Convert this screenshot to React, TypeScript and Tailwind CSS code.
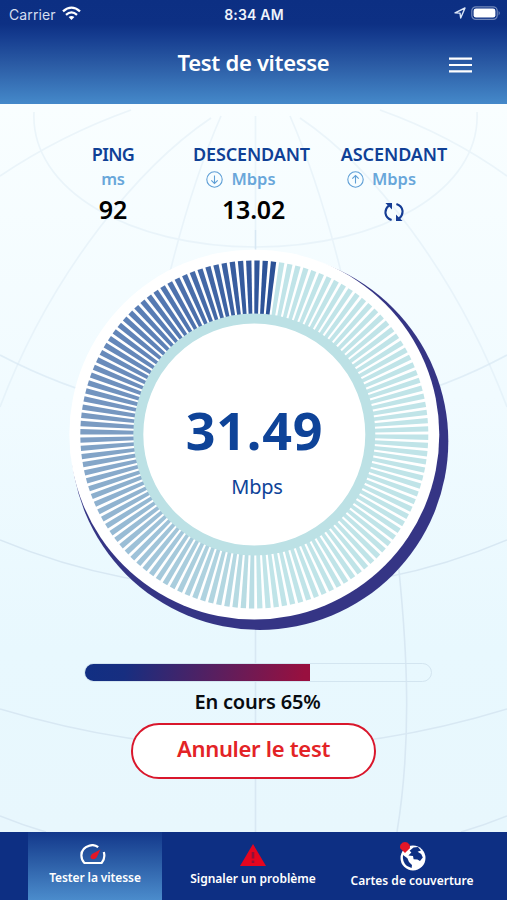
import React from 'react';

const TICK_COUNT = 132;
const STEP = 360 / TICK_COUNT;
const CX = 254.3;
const CY = 434.5;

// speed ramp, from the bottom of the dial (0) clockwise to the top (1)
const RAMP = [
  [186, 222, 228],
  [157, 193, 216],
  [122, 155, 194],
  [88, 124, 180],
  [42, 80, 150],
];

const rampColor = (t: number) => {
  const pos = Math.min(Math.max(t, 0), 0.9999) * (RAMP.length - 1);
  const i = Math.floor(pos);
  const c = RAMP[i].map((v, k) => Math.round(v + (RAMP[i + 1][k] - v) * (pos - i)));
  return `rgb(${c.join(',')})`;
};

const point = (deg: number, r: number) => {
  const a = (deg * Math.PI) / 180;
  return `${(CX + r * Math.sin(a)).toFixed(2)},${(CY - r * Math.cos(a)).toFixed(2)}`;
};

const ticks = Array.from({ length: TICK_COUNT }, (_, i) => {
  const deg = -179.1 + i * STEP;
  return {
    points: [point(deg - 0.88, 120), point(deg - 0.88, 174), point(deg + 0.88, 174), point(deg + 0.88, 120)].join(' '),
    fill: deg < 7 ? rampColor((deg + 180) / 187) : '#c0e4e8',
  };
});

const Globe: React.FC = () => (
  <svg className="absolute inset-0" width="507" height="728" viewBox="0 104 507 728" fill="none" stroke="#d8e8f3" strokeWidth="1.6" aria-hidden="true">
    <path d="M255.5 230V832" />
    <g opacity=".4">
      <path d="M255.5 116V230" />
      <path d="M34 112C30 190 130 247 255.5 247S481 190 477 112" />
      <path d="M290 116Q318 180 341 272M221 116Q193 180 170 272" />
      <path d="M300 118C370 165 455 270 507 407M211 118C141 165 52 270 0 407" />
      <path d="M380 110Q450 135 507 176M131 110Q61 135 0 176" />
    </g>
    <path d="M0 355Q120 418 255 418T507 355" opacity=".7" />
    <path d="M0 540Q120 590 255 590T507 540" />
    <path d="M0 709Q130 748 255 748T507 709" />
    <path d="M0 816Q22 825 46 832M507 816Q485 825 461 832" />
    <path d="M341 272Q392 440 399 571C407 650 412 740 397 832" />
  </svg>
);

const Dial: React.FC = () => (
  <svg className="absolute inset-0" width="400" height="400" viewBox="54 235 400 400" aria-hidden="true">
    <circle cx="259.7" cy="441.3" r="188.6" fill="#353585" />
    <circle cx={CX} cy={CY} r="185" fill="#fff" />
    {ticks.map(t => (
      <polygon key={t.points} points={t.points} fill={t.fill} />
    ))}
    <circle cx={CX} cy={CY} r="116" fill="#fff" stroke="#bce1e5" strokeWidth="10" />
  </svg>
);

const DirectionIcon: React.FC<{ up?: boolean }> = ({ up }) => (
  <svg width="17" height="17" viewBox="0 0 17 17" fill="none" stroke="#5f9fd6" strokeWidth="1.1">
    <circle cx="8.5" cy="8.5" r="7.7" />
    <path d={up ? 'M8.5 12.5V4.5M5.3 7.7L8.5 4.5L11.7 7.7' : 'M8.5 4.5V12.5M5.3 9.3L8.5 12.5L11.7 9.3'} />
  </svg>
);

const App: React.FC = () => {
  const progress = 65;

  return (
    <div className="flex h-[900px] w-[507px] flex-col overflow-hidden bg-[#eaf8fd] font-['Noto_Sans','Open_Sans',sans-serif]">
      <header className="h-[104px] bg-[linear-gradient(#0c2f83_0px,#0d3084_24px,#153c8f_36px,#2c5da6_66px,#4488c9_103px)] text-white">
        <div className="grid h-7 grid-cols-3 items-center pl-[9px] pr-[6px] font-['Inter',sans-serif]">
          <div className="flex items-center gap-[6px]">
            <span className="text-[14px] tracking-[0.1px] text-[#d5def0]">Carrier</span>
            <svg className="-mt-[2px]" width="19" height="15" viewBox="0 0 19 15" fill="none" stroke="#fff" strokeWidth="2.3">
              <path d="M1 5.4Q9.5 -2.2 18 5.4M4 8.8Q9.5 4 15 8.8" />
              <path d="M6.6 11.1Q9.5 8.7 12.4 11.1L9.5 14Z" fill="#fff" stroke="none" />
            </svg>
          </div>
          <span className="pr-[2px] text-center text-[14px] font-semibold tracking-[0.2px] text-[#eef3fb]">8:34 AM</span>
          <div className="-mt-[2px] flex items-center justify-end gap-[5px]">
            <svg width="12" height="12" viewBox="0 0 12 12" fill="none" stroke="#dbe6f7" strokeWidth="1.4" strokeLinejoin="round">
              <path d="M1 5.8L11 1L6.7 11L6 6.1Z" />
            </svg>
            <svg width="30" height="15" viewBox="0 0 30 15">
              <rect x=".8" y=".8" width="25.4" height="12.6" rx="4" fill="none" stroke="#7188ba" strokeWidth="1.2" />
              <rect x="2.6" y="2.6" width="21.8" height="9" rx="2.4" fill="#fff" />
              <path d="M27.6 5Q30 7 27.6 9.4Z" fill="#7188ba" />
            </svg>
          </div>
        </div>
        <div className="grid h-[72px] grid-cols-[1fr_auto_1fr] items-center">
          <span />
          <h1 className="-mt-[4px] text-[22px] font-semibold leading-7 tracking-[-0.3px]">Test de vitesse</h1>
          <svg className="mr-[35px] mt-px justify-self-end" width="23" height="16" viewBox="0 0 23 16" stroke="#fff" strokeWidth="2.2">
            <path d="M0 1.6H23M0 8H23M0 14.4H23" />
          </svg>
        </div>
      </header>

      <main className="relative h-[728px] bg-[linear-gradient(#f9feff,#f1fbff_40%,#e8f8fe_75%,#e8f7fd)]">
        <Globe />
        <div className="relative flex h-full flex-col items-center">
          <section className="grid h-[131px] w-full grid-cols-[113px_1fr_1fr] pt-[38px] text-center font-semibold text-[#0f4096]" aria-label="Résultats">
            <div className="ml-[63px] w-[100px]">
              <div className="text-[18px] leading-6 tracking-[-0.6px]">PING</div>
              <div className="mt-px text-[16.5px] leading-6 tracking-[-0.3px] text-[#69a7da]">ms</div>
              <div className="text-[25px] leading-[36px] text-black">92</div>
            </div>
            <div className="ml-[68.5px] w-[140px]">
              <div className="text-[18px] leading-6 tracking-[-0.15px]">DESCENDANT</div>
              <div className="-ml-[21px] mt-px flex h-6 items-center justify-center gap-[8px] text-[16.5px] text-[#69a7da]">
                <DirectionIcon />
                Mbps
              </div>
              <div className="pl-[4px] text-[25px] leading-[36px] tracking-[-0.2px] text-black">13.02</div>
            </div>
            <div className="ml-[2px] w-[140px]">
              <div className="pl-[1px] text-[18px] leading-6 tracking-[-0.1px]">ASCENDANT</div>
              <div className="-ml-[24px] mt-px flex h-6 items-center justify-center gap-[8px] text-[16.5px] text-[#69a7da]">
                <DirectionIcon up />
                Mbps
              </div>
              <svg className="mx-auto mt-[11px]" width="20" height="20" viewBox="0 0 20 20" fill="none" stroke="#153c94" strokeWidth="2.1">
                <path d="M7.6 18C.2 15.5 -.2 8 4.8 3.4M12.4 2C19.8 4.5 20.2 12 15.2 16.6" />
                <path d="M1.4 1H8V7.4L5.8 5.2L4 3.4ZM18.6 19H12V12.6L14.2 14.8L16 16.6Z" fill="#153c94" stroke="none" />
              </svg>
            </div>
          </section>

          <section className="relative h-[400px] w-[399px]">
            <Dial />
            <div className="relative flex flex-col items-center pt-[160px] text-[#0e4398]">
              <span className="pl-[2px] text-[52px] font-bold leading-[70px] tracking-[0.8px]">31.49</span>
              <span className="mt-[8px] pl-[7px] text-[20px] leading-7 tracking-[-0.2px]">Mbps</span>
            </div>
          </section>

          <div className="ml-[9px] mt-[28px] h-[19px] w-[348px] overflow-hidden rounded-full border border-[#d3e5f0]">
            <div className="h-full bg-[linear-gradient(100deg,#112f83,#172e80_18%,#98103f_97%)]" style={{ width: `${progress}%` }} />
          </div>
          <p className="mt-[6px] pl-[8px] text-[20px] font-semibold leading-7 tracking-[-0.2px] text-[#080c10]">En cours {progress}%</p>
          <button className="mt-[7px] h-[56px] w-[245px] rounded-full border-[2.5px] border-[#d9172c] bg-white pb-[5px] text-[22px] font-semibold tracking-[-0.3px] text-[#e32326]">
            Annuler le test
          </button>
        </div>
      </main>

      <nav className="flex h-[68px] bg-[#0d2f83] text-[12px] font-semibold text-white">
        <a className="ml-[28px] flex w-[134px] flex-col items-center bg-[linear-gradient(#13388b,#2c5ea7_45%,#4b8ccc)] pt-[12px]">
          <svg className="-ml-[5px]" width="26" height="21" viewBox="0 0 26 21" fill="none" stroke="#fff" strokeWidth="2.2">
            <path d="M18.2 3.2C15.5 1 12 .8 9.5 1.6C4 3.2 1.3 7.2 1.4 11.6Q1.5 16.4 4.4 19H21.6Q25.6 14.5 23.8 8" strokeLinejoin="round" />
            <path d="M20.4 5.4L16.6 13.4Q13.4 16.8 10.6 14Q9.8 11.8 12 10Z" fill="#e31728" stroke="none" />
          </svg>
          <span className="mt-[3px] leading-5 tracking-[-0.1px]">Tester la vitesse</span>
        </a>
        <a className="flex w-[182px] flex-col items-center pt-[12px]">
          <svg width="26" height="22" viewBox="0 0 26 22">
            <path d="M13 0L26 22H0Z" fill="#e5051f" />
            <path d="M13 8V14.5M13 16.5V19" stroke="#8e1238" strokeWidth="2.6" />
          </svg>
          <span className="mt-[3px] leading-5">Signaler un problème</span>
        </a>
        <a className="-ml-[5px] flex w-[146px] flex-col items-center pt-[10px]">
          <svg width="27" height="29" viewBox="0 0 27 29">
            <circle cx="14" cy="16" r="12.5" fill="#fff" />
            <path d="M14.5 5.5L19 5L22 8.5L18.6 9.8L22.2 12L23.8 15.5L21 19L18.4 17.4L14.6 17.2L14 14L9.4 13.6L12.4 10.6L10.6 8.8ZM4 13L8.4 16.2L10 20L13 23L12.6 26L8 24Q3 20 4 13Z" fill="#0d2f83" />
            <path d="M6 0A5 4.8 0 0 0 1.4 6.6L6 11L10.6 6.6A5 4.8 0 0 0 6 0Z" fill="#e31728" />
          </svg>
          <span className="leading-5">Cartes de couverture</span>
        </a>
      </nav>
    </div>
  );
};

export default App;
